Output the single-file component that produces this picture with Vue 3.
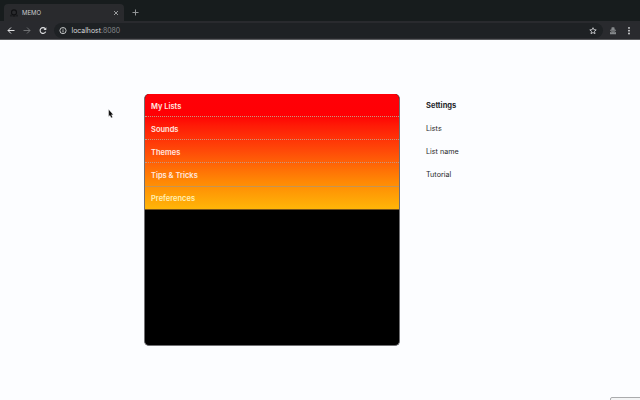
<script setup>
const menu = ['My Lists', 'Sounds', 'Themes', 'Tips & Tricks', 'Preferences']
const settings = ['Lists', 'List name', 'Tutorial']
</script>

<template>
  <div class="window">
    <header class="tabs">
      <div class="tab">
        <svg class="favicon" width="8" height="8" viewBox="0 0 8 8" fill="none" stroke="#101113" stroke-width="1.1">
          <circle cx="4" cy="3.4" r="2.5" /><path d="M1 7.4V5.8M7 7.4V5.8M2.5 7h3" />
        </svg>
        <span class="title">MEMO</span>
        <svg class="close" width="6" height="6" viewBox="0 0 6 6" stroke="#b5b7b9" stroke-width=".8"><path d="M1 1l4 4M5 1L1 5" /></svg>
      </div>
      <svg class="plus" width="7" height="7" viewBox="0 0 7 7" stroke="#929597" stroke-width="1"><path d="M3.5 .5v6M.5 3.5h6" /></svg>
    </header>
    <nav class="toolbar">
      <svg class="back" width="8" height="8" viewBox="0 0 8 8" fill="none" stroke="#dedfe1" stroke-width="1"><path d="M7.5 3.5H1M4 .5L1 3.5l3 3" /></svg>
      <svg class="forward" width="8" height="8" viewBox="0 0 8 8" fill="none" stroke="#77797c" stroke-width=".9"><path d="M.5 3.5H7M4 .5l3 3-3 3" /></svg>
      <svg class="reload" width="8" height="8" viewBox="0 0 8 8" fill="none" stroke="#dedfe1" stroke-width="1.1"><path d="M6.7 4.6A2.9 2.9 0 1 1 6.2 1.6" /><path d="M7.3 .3v2.8H4.5z" fill="#dedfe1" stroke="none" /></svg>
      <div class="omnibox">
        <svg width="8" height="8" viewBox="0 0 8 8" fill="none" stroke="#cfd1d3" stroke-width=".9"><circle cx="4" cy="3.6" r="3.1" /><path d="M4 3.2v2.2M4 1.7v.9" /></svg>
        <span class="url">localhost<span class="port">:8080</span></span>
        <svg class="star" width="8" height="8" viewBox="0 0 8 8" fill="none" stroke="#c9cbce" stroke-width=".9"><path d="M4 .7l.9 2 2.3.2-1.7 1.5.5 2.3-2-1.2-2 1.2.5-2.3L.8 2.9l2.3-.2z" /></svg>
      </div>
      <svg class="profile" width="8" height="8" viewBox="0 0 8 8" fill="#85888b"><path d="M2.2 2.8L2.7.3h2.6l.5 2.5zM1 2.8h6v1H1z" /><path d="M1 7.2V5.4l1.3-1.2h3.4L7 5.4v1.8z" /><path d="M2 5.2h1.4M4.6 5.2H6" stroke="#4b4d50" stroke-width=".6" /></svg>
      <svg class="more" width="2" height="8" viewBox="0 0 2 8" fill="#d9dbdd"><circle cx="1" cy=".9" r=".9" /><circle cx="1" cy="3.7" r=".9" /><circle cx="1" cy="6.5" r=".9" /></svg>
    </nav>
    <main class="page">
      <section class="card">
        <ul class="menu">
          <li v-for="item in menu" :key="item">{{ item }}</li>
        </ul>
      </section>
      <aside class="settings">
        <h2>Settings</h2>
        <p v-for="item in settings" :key="item">{{ item }}</p>
      </aside>
    </main>
    <svg class="cursor" width="6" height="10" viewBox="0 0 6 10"><path d="M.7 .5v7l1.3-1.2 1.1 2.5 1.4-.6-1.1-2.5h1.8z" fill="#080808" stroke="#dcdddd" stroke-width=".3" /></svg>
    <div class="status"></div>
  </div>
</template>

<style>
body { margin: 0; }
</style>

<style scoped>
.window {
  position: relative;
  display: flex;
  flex-direction: column;
  width: 640px;
  height: 400px;
  overflow: hidden;
  background: #fcfdff;
  font-family: Inter, "Liberation Sans", sans-serif;
}
svg { display: block; flex: none; }
.tabs {
  display: flex;
  box-sizing: border-box;
  height: 21px;
  padding: 4px 0 0 4px;
  background: #171c1d;
}
.tab {
  display: flex;
  align-items: center;
  box-sizing: border-box;
  width: 120px;
  padding: 0 5px 0 6px;
  border-radius: 4px 4px 0 0;
  background: #292a2d;
}
.title {
  margin-left: 4px;
  color: #c8cacc;
  font-size: 6px;
  line-height: 10px;
}
.close { margin-left: auto; }
.plus { margin: 5px 0 0 8px; }
.toolbar {
  display: flex;
  align-items: center;
  box-sizing: border-box;
  height: 19px;
  padding: 1px 10px 0 7px;
  border-bottom: 1px solid #5a5b5e;
  background: #292a2e;
}
.forward, .reload { margin-left: 8px; }
.omnibox {
  display: flex;
  align-items: center;
  box-sizing: border-box;
  flex: 1;
  height: 15px;
  margin-left: 7px;
  padding: 0 6px 0 5px;
  border-radius: 8px;
  background: #1e2124;
}
.url {
  margin-left: 4.5px;
  color: #d5d7d9;
  font-size: 6.9px;
  line-height: 12px;
}
.port { color: #85888b; }
.star { margin-left: auto; }
.profile { margin-left: 6px; }
.more { margin-left: 11px; }
.page {
  display: flex;
  align-items: flex-start;
  padding: 54px 0 0 144px;
}
.card {
  box-sizing: border-box;
  width: 256px;
  height: 252px;
  overflow: hidden;
  border: 1px solid #707073;
  border-top: 0;
  border-radius: 5px;
  background: #000;
}
.menu {
  margin: 0;
  padding: 0;
  list-style: none;
  background: linear-gradient(#ff0008 0%, #ff0004 18%, #ff1a06 27%, #ff4a08 49%, #ff8704 75%, #ffb708 100%);
}
.menu li {
  box-sizing: border-box;
  height: 23px;
  padding: 2px 0 0 6px;
  border-bottom: 1px dotted #c8957e;
  color: #ffe9e0;
  font-size: 7.5px;
  font-weight: 600;
  line-height: 22px;
}
.menu li:nth-child(4) {
  height: 24px;
  border-bottom: 1px solid #c59455;
}
.menu li:last-child {
  padding-top: 1px;
  border-bottom: 1px solid #74501a;
  color: #fff0b8;
}
.settings {
  margin-left: 26px;
  color: #27282b;
  font-size: 7.2px;
  line-height: 23px;
}
.settings h2, .settings p {
  margin: 0;
  font-size: inherit;
}
.settings h2 { font-size: 7.5px; font-weight: 700; }
.cursor {
  position: absolute;
  top: 109px;
  left: 108px;
}
.status {
  position: absolute;
  right: -1px;
  bottom: -1px;
  box-sizing: border-box;
  width: 31px;
  height: 4px;
  border: 1px solid #aaabad;
  border-radius: 2px 0 0;
  background: #f3f4f5;
}
</style>
